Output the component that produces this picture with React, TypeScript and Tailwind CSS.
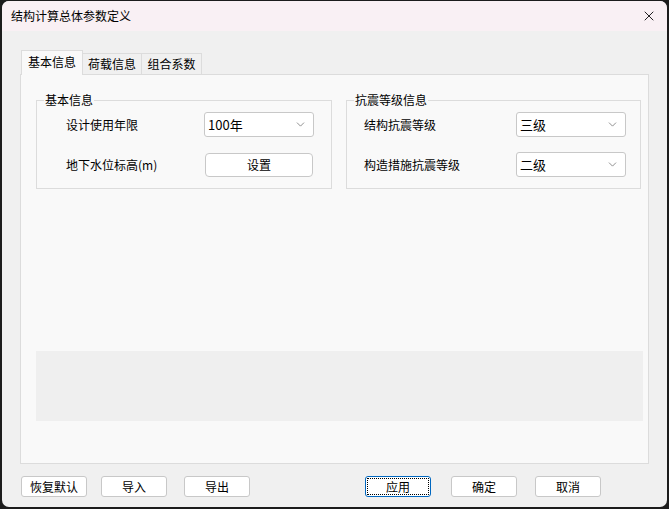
import { ChevronDown, X } from 'lucide-react'

const font = { fontFamily: '"Noto Sans CJK SC", "Noto Sans", sans-serif' }

function Combo({ value }: { value: string }) {
  return (
    <div className="flex h-[25px] w-[110px] items-center justify-between rounded-[3px] border border-[#c8c8c8] bg-white pl-[3px] pr-[6px] text-[13px] text-black">
      <span>{value}</span>
      <ChevronDown className="h-[13px] w-[13px] text-[#555]" strokeWidth={1.2} />
    </div>
  )
}

function GroupBox({ title, children, width }: { title: string; children: React.ReactNode; width: string }) {
  return (
    <div className={`relative h-[89px] border border-[#dcdcdc] ${width}`}>
      <span className="absolute -top-[10px] left-[7px] bg-[#f9f9f9] px-[1px] text-[12px] leading-[18px] text-black">
        {title}
      </span>
      {children}
    </div>
  )
}

function DlgButton({ label, focused }: { label: string; focused?: boolean }) {
  return (
    <button
      className={
        'flex h-[21px] w-[66px] items-center justify-center rounded-[3px] bg-white text-[12px] text-black ' +
        (focused ? 'border border-[#0067c0] p-[1px]' : 'border border-[#c8c8c8]')
      }
    >
      {focused ? (
        <span className="flex h-full w-full items-center justify-center border border-dotted border-black">{label}</span>
      ) : (
        label
      )}
    </button>
  )
}

export default function App() {
  return (
    <div className="h-[509px] w-[669px] bg-[#1c1c1c] pl-[2px] pr-[2px] pt-[1px] pb-[2px]" style={font}>
      <div className="flex h-full w-full flex-col overflow-hidden rounded-[7px] bg-[#f0f0f0]">
        {/* Title bar */}
        <div className="flex h-[30px] shrink-0 items-center justify-between bg-[#f9f0f4] pl-[9px] pr-[10px]">
          <span className="text-[12px] text-black">结构计算总体参数定义</span>
          <X className="h-[16px] w-[16px] text-black" strokeWidth={1.3} />
        </div>

        <div className="flex flex-1 flex-col px-[18px] pt-[19px]">
          {/* Tabs */}
          <div className="flex h-[24px] items-end pl-[1px] text-[12px] text-black">
            <div className="relative z-10 -mb-[1px] flex h-[25px] w-[62px] items-center justify-center border border-b-0 border-[#dcdcdc] bg-[#f9f9f9] pb-[2px]">
              基本信息
            </div>
            <div className="flex h-[21px] w-[59px] items-center justify-center border border-l-0 border-b-0 border-[#dcdcdc]">
              荷载信息
            </div>
            <div className="flex h-[21px] w-[60px] items-center justify-center border border-l-0 border-b-0 border-[#dcdcdc]">
              组合系数
            </div>
          </div>

          {/* Tab panel */}
          <div className="flex h-[390px] w-[629px] flex-col border border-[#dcdcdc] bg-[#f9f9f9] pl-[15px] pt-[25px]">
            <div className="flex gap-[14px]">
              <GroupBox title="基本信息" width="w-[296px]">
                <div className="flex flex-col gap-[16px] pl-[29px] pt-[11px] text-[12px] text-black">
                  <div className="flex items-center">
                    <span className="w-[138px]">设计使用年限</span>
                    <Combo value="100年" />
                  </div>
                  <div className="flex items-center">
                    <span className="w-[139px]">地下水位标高(m)</span>
                    <div className="flex h-[24px] w-[108px] items-center justify-center rounded-[4px] border border-[#c8c8c8] bg-white">
                      设置
                    </div>
                  </div>
                </div>
              </GroupBox>
              <GroupBox title="抗震等级信息" width="w-[295px]">
                <div className="flex flex-col gap-[15px] pl-[17px] pt-[11px] text-[12px] text-black">
                  <div className="flex items-center">
                    <span className="w-[152px]">结构抗震等级</span>
                    <Combo value="三级" />
                  </div>
                  <div className="flex items-center">
                    <span className="w-[152px]">构造措施抗震等级</span>
                    <Combo value="二级" />
                  </div>
                </div>
              </GroupBox>
            </div>
            <div className="mt-[162px] h-[70px] w-[607px] bg-[#efefef]" />
          </div>

          {/* Buttons */}
          <div className="mt-[12px] flex items-center pl-[1px]">
            <DlgButton label="恢复默认" />
            <div className="ml-[14px]">
              <DlgButton label="导入" />
            </div>
            <div className="ml-[17px]">
              <DlgButton label="导出" />
            </div>
            <div className="ml-[115px]">
              <DlgButton label="应用" focused />
            </div>
            <div className="ml-[20px]">
              <DlgButton label="确定" />
            </div>
            <div className="ml-[18px]">
              <DlgButton label="取消" />
            </div>
          </div>
        </div>
      </div>
    </div>
  )
}
